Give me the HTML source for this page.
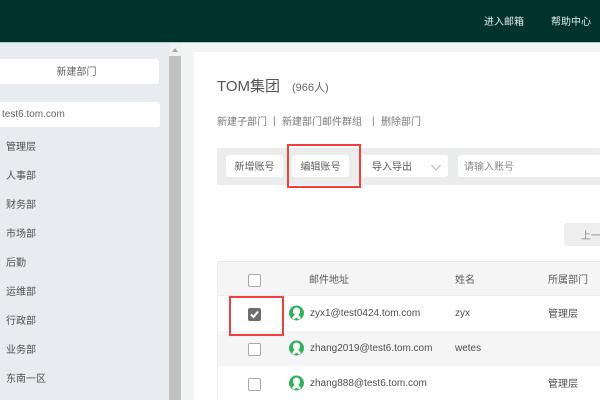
<!DOCTYPE html>
<html><head><meta charset="utf-8"><style>
html,body{margin:0;padding:0}
body{width:600px;height:400px;overflow:hidden;position:relative;background:#f3f4f4;font-family:"Liberation Sans","Noto Sans CJK SC",sans-serif;color:#4f4f4f}
div,span{position:absolute;box-sizing:border-box;white-space:nowrap}
.t{font-size:10px;line-height:14px}
.btn{background:#fff;border-radius:3px;text-align:center;font-size:10px;color:#5f5f5f}
.cb{width:13px;height:13px;background:#fff;border:1px solid #a8a8a8;border-radius:2px;left:248px}
.row{left:218px;width:382px;height:35px}
.red{border:2px solid #f04040}
</style></head><body>
<div style="left:0;top:0;width:600px;height:42px;background:#00332e"></div>
<div style="left:0;top:42px;width:600px;height:1px;background:#b8c8c6"></div>
<div class="t" style="left:484px;top:16px;color:#e4eeec">进入邮箱</div>
<div class="t" style="left:551px;top:16px;color:#e4eeec">帮助中心</div>

<div style="left:0;top:43px;width:169px;height:357px;background:#e8ebf0"></div>
<div style="left:169px;top:43px;width:12px;height:357px;background:#f1f1f1"></div>
<div style="left:169px;top:56px;width:12px;height:344px;background:#c1c1c1"></div>
<div style="left:172px;top:48px;width:0;height:0;border-left:3px solid transparent;border-right:3px solid transparent;border-bottom:4px solid #a8a8a8"></div>

<div class="btn" style="left:-6px;top:59px;width:165px;height:25px;line-height:27px">新建部门</div>
<div class="t" style="left:-6px;top:102px;width:166px;height:25px;background:#fff;border-radius:3px;line-height:25px;padding-left:8px;font-size:10px;color:#666">test6.tom.com</div>
<div class="t" style="left:6px;top:141px">管理层</div>
<div class="t" style="left:6px;top:170px">人事部</div>
<div class="t" style="left:6px;top:199px">财务部</div>
<div class="t" style="left:6px;top:228px">市场部</div>
<div class="t" style="left:6px;top:257px">后勤</div>
<div class="t" style="left:6px;top:286px">运维部</div>
<div class="t" style="left:6px;top:315px">行政部</div>
<div class="t" style="left:6px;top:344px">业务部</div>
<div class="t" style="left:6px;top:373px">东南一区</div>

<div style="left:194px;top:52px;width:406px;height:348px;background:#fff"></div>
<div style="left:217px;top:77px;font-size:15px;line-height:20px;color:#555">TOM集团</div>
<div style="left:292px;top:81px;font-size:11px;line-height:14px;color:#666">(966人)</div>
<div class="t" style="left:217px;top:116px;color:#777">新建子部门</div>
<div class="t" style="left:273px;top:115px;color:#777">|</div>
<div class="t" style="left:282px;top:116px;color:#777">新建部门邮件群组</div>
<div class="t" style="left:372px;top:115px;color:#777">|</div>
<div class="t" style="left:381px;top:116px;color:#777">删除部门</div>

<div style="left:217px;top:148px;width:383px;height:37px;background:#ebecec;border-radius:2px"></div>
<div class="btn" style="left:226px;top:155px;width:57px;height:22px;line-height:25px">新增账号</div>
<div class="btn" style="left:292px;top:155px;width:57px;height:22px;line-height:25px">编辑账号</div>
<div class="btn" style="left:361px;top:155px;width:87px;height:22px;line-height:25px;text-align:left;padding-left:11px;color:#555">导入导出</div>
<svg style="position:absolute;left:431px;top:164px" width="10" height="7" viewBox="0 0 10 7"><path d="M.5 1l4.5 5 4.5-5" fill="none" stroke="#b5b5b5" stroke-width="1"/></svg>
<div class="btn" style="left:458px;top:155px;width:150px;height:22px;line-height:25px;text-align:left;padding-left:6px;color:#888">请输入账号</div>
<div class="red" style="left:287px;top:144px;width:74px;height:44px"></div>

<div class="btn" style="left:564px;top:223px;width:50px;height:23px;line-height:27px;background:#eeeeee;text-align:left;padding-left:17px;color:#888">上一页</div>

<div style="left:217px;top:261px;width:383px;height:1px;background:#e8e8e8"></div>
<div style="left:217px;top:261px;width:1px;height:139px;background:#eeeeee"></div>
<div class="row" style="top:262px;height:34px;background:#f5f5f5;border-bottom:1px solid #ececec"></div>
<div class="row" style="top:331px;background:#f5f5f5"></div>

<div class="cb" style="top:274px"></div>
<div class="t" style="left:309px;top:274px;color:#5a5a5a">邮件地址</div>
<div class="t" style="left:455px;top:274px;color:#5a5a5a">姓名</div>
<div class="t" style="left:548px;top:274px;color:#5a5a5a">所属部门</div>

<div class="cb" style="top:308px;background:#6e6e6e;border-color:#6e6e6e"></div>
<svg style="position:absolute;left:248px;top:308px" width="13" height="13" viewBox="0 0 13 13"><path d="M3 6.5l2.5 2.5 4.5-5.5" fill="none" stroke="#fff" stroke-width="2"/></svg>
<div class="cb" style="top:343px"></div>
<div class="cb" style="top:378px"></div>

<svg style="position:absolute;left:289px;top:305px" width="15" height="16" viewBox="0 0 15 16"><circle cx="7.5" cy="8" r="7.5" fill="#2fb45a"/><ellipse cx="7.5" cy="6.4" rx="3.6" ry="3.9" fill="#fff"/><path d="M3 13L5.6 9.8h3.8L12 13 10.2 14.6 7.5 12.6 4.8 14.6z" fill="#fff"/></svg>
<svg style="position:absolute;left:289px;top:340px" width="15" height="16" viewBox="0 0 15 16"><circle cx="7.5" cy="8" r="7.5" fill="#2fb45a"/><ellipse cx="7.5" cy="6.4" rx="3.6" ry="3.9" fill="#fff"/><path d="M3 13L5.6 9.8h3.8L12 13 10.2 14.6 7.5 12.6 4.8 14.6z" fill="#fff"/></svg>
<svg style="position:absolute;left:289px;top:375px" width="15" height="16" viewBox="0 0 15 16"><circle cx="7.5" cy="8" r="7.5" fill="#2fb45a"/><ellipse cx="7.5" cy="6.4" rx="3.6" ry="3.9" fill="#fff"/><path d="M3 13L5.6 9.8h3.8L12 13 10.2 14.6 7.5 12.6 4.8 14.6z" fill="#fff"/></svg>

<div class="t" style="left:310px;top:307px">zyx1@test0424.tom.com</div>
<div class="t" style="left:310px;top:342px">zhang2019@test6.tom.com</div>
<div class="t" style="left:310px;top:377px">zhang888@test6.tom.com</div>
<div class="t" style="left:455px;top:307px">zyx</div>
<div class="t" style="left:455px;top:342px">wetes</div>
<div class="t" style="left:548px;top:308px">管理层</div>
<div class="t" style="left:548px;top:378px">管理层</div>

<div class="red" style="left:229px;top:296px;width:55px;height:40px"></div>
</body></html>
